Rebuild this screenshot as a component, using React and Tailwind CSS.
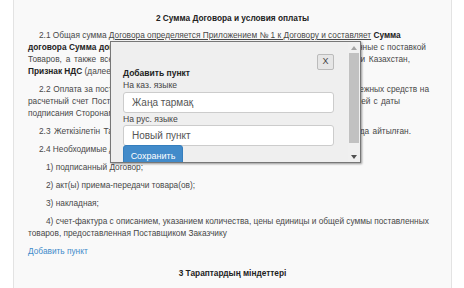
import React from "react";

const L = ({ children, className = "" }) => (
  <div className={"whitespace-nowrap h-[12px] leading-[12px] " + className}>{children}</div>
);

export default function App() {
  return (
    <div
      className="relative w-[464px] h-[288px] overflow-hidden bg-white flex text-[8.3px] text-[#484848]"
      style={{ fontFamily: '"Liberation Sans", Arial, sans-serif' }}
    >
      <div className="w-[14px] shrink-0 bg-white border-r border-[#e3e3e3]" />
      <div className="w-[437px] shrink-0 bg-[#f9f9f9] pl-[14px] pt-[12px] overflow-hidden">
        <div className="font-bold text-center h-[12px] leading-[12px] pr-[14px] text-[#222]">
          2 Сумма Договора и условия оплаты
        </div>
        <div className="mt-[5px]">
          <L className="pl-[11px]">
            2.1 Общая сумма{" "}
            <span className="underline">Договора определяется Приложением № 1 к Договору и составляет</span>{" "}
            <b className="text-[#222]">Сумма</b>
          </L>
          <L className="w-[398px] [text-align-last:justify]">
            <b className="text-[#222]">договора Сумма договора</b> (сумма прописью) тенге, и включает все расходы, связанные с поставкой
          </L>
          <L className="w-[382px] [text-align-last:justify]">
            Товаров, а также все налоги и другие обязательные платежи в бюджет Республики Казахстан,
          </L>
          <L>
            <b className="text-[#222]">Признак НДС</b> (далее – Цена Договора).
          </L>
        </div>
        <div className="mt-[6px]">
          <L className="pl-[11px] w-[401px] [text-align-last:justify]">
            2.2 Оплата за поставленный Товар производится Заказчиком путем перевода денежных средств на
          </L>
          <L className="w-[372px] [text-align-last:justify]">
            расчетный счет Поставщика в течение не более чем 30 (тридцати) календарных дней с даты
          </L>
          <L>подписания Сторонами документов, указанных в пункте 2.4.</L>
        </div>
        <L className="mt-[6px] pl-[11px] w-[383px] [text-align-last:justify]">
          2.3 Жеткізілетін Тауарлардың құны және оны төлеу тәртібі осы Шарттың жоғарыда айтылған.
        </L>
        <L className="mt-[6px] pl-[11px]">2.4 Необходимые документы для оплаты:</L>
        <L className="mt-[6px] pl-[18px]">1) подписанный Договор;</L>
        <L className="mt-[6px] pl-[18px]">2) акт(ы) приема-передачи товара(ов);</L>
        <L className="mt-[6px] pl-[18px]">3) накладная;</L>
        <div className="mt-[6px]">
          <L className="pl-[18px]">4) счет-фактура с описанием, указанием количества, цены единицы и общей суммы поставленных</L>
          <L>товаров, предоставленная Поставщиком Заказчику</L>
        </div>
        <L className="mt-[6px] text-[#428bca]">Добавить пункт</L>
        <div className="mt-[10px] font-bold text-center h-[12px] leading-[12px] pr-[14px] text-[#222]">
          3 Тараптардың міндеттері
        </div>
      </div>
      <div className="w-[13px] shrink-0 bg-white border-l border-[#e3e3e3]" />

      {/* modal */}
      <div className="absolute left-[110px] top-[41px] w-[251px] h-[122px] border border-[#777] bg-[#efefef] shadow-[1px_1px_2px_rgba(0,0,0,0.4)] flex overflow-hidden">
        <div className="relative flex-1 pl-[12px] pr-[14px] pt-[25px]">
          <div className="absolute right-[14px] top-[12px] w-[17px] h-[16px] border border-[#bbb] rounded-[2px] bg-[#e6e6e6] flex items-center justify-center text-[9px] text-[#444]">
            X
          </div>
          <div className="font-bold text-[8.5px] leading-[12px] text-[#222]">Добавить пункт</div>
          <div className="text-[8.6px] leading-[12px] text-[#444]">На каз. языке</div>
          <div className="mt-[1px] h-[21px] bg-white border border-[#ccc] rounded-[3px] flex items-center px-[8px] text-[10px] text-[#555]">
            Жаңа тармақ
          </div>
          <div className="text-[8.6px] leading-[12px] text-[#444]">На рус. языке</div>
          <div className="h-[21px] bg-white border border-[#ccc] rounded-[3px] flex items-center px-[8px] text-[10px] text-[#555]">
            Новый пункт
          </div>
          <div className="-mt-[1px] w-[60px] h-[24px] shrink-0 bg-[#428bca] border border-[#357ebd] rounded-[3px] flex items-center justify-center text-white text-[9px]">
            Сохранить
          </div>
        </div>
        <div className="w-[12px] shrink-0 bg-[#f0f0f0] flex flex-col items-center">
          <div className="h-[11px] w-full flex items-center justify-center">
            <svg width="6" height="4" viewBox="0 0 6 4"><path d="M0 4 L3 0 L6 4Z" fill="#a3a3a3" /></svg>
          </div>
          <div className="w-[10px] h-[90px] bg-[#c1c1c1]" />
          <div className="flex-1" />
          <div className="h-[11px] w-full flex items-center justify-center">
            <svg width="6" height="4" viewBox="0 0 6 4"><path d="M0 0 L6 0 L3 4Z" fill="#505050" /></svg>
          </div>
        </div>
      </div>
    </div>
  );
}
